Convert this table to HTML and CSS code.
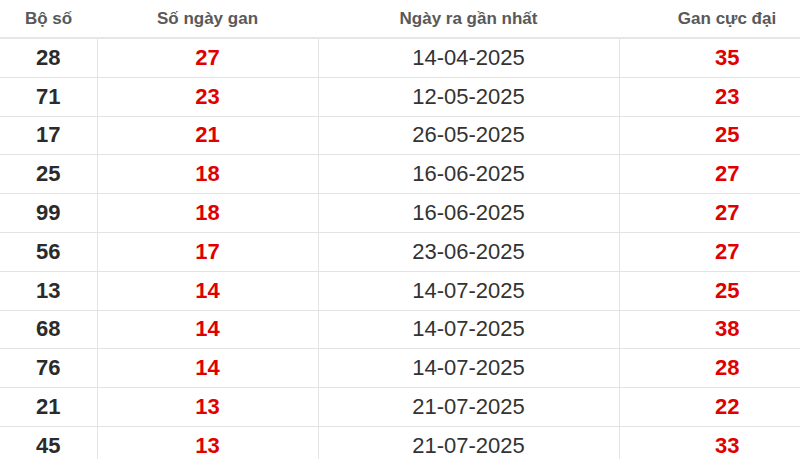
FILE: index.html
```html
<!DOCTYPE html>
<html lang="vi">
<head>
<meta charset="utf-8">
<link rel="stylesheet" href="styles.css">
</head>
<body>
<table class="gan">
  <colgroup>
    <col class="c1"><col class="c2"><col class="c3"><col class="c4">
  </colgroup>
  <thead>
    <tr><th>Bộ số</th><th>Số ngày gan</th><th>Ngày ra gần nhất</th><th>Gan cực đại</th></tr>
  </thead>
  <tbody>
    <tr><td class="num">28</td><td class="red">27</td><td class="date">14-04-2025</td><td class="red">35</td></tr>
    <tr><td class="num">71</td><td class="red">23</td><td class="date">12-05-2025</td><td class="red">23</td></tr>
    <tr><td class="num">17</td><td class="red">21</td><td class="date">26-05-2025</td><td class="red">25</td></tr>
    <tr><td class="num">25</td><td class="red">18</td><td class="date">16-06-2025</td><td class="red">27</td></tr>
    <tr><td class="num">99</td><td class="red">18</td><td class="date">16-06-2025</td><td class="red">27</td></tr>
    <tr><td class="num">56</td><td class="red">17</td><td class="date">23-06-2025</td><td class="red">27</td></tr>
    <tr><td class="num">13</td><td class="red">14</td><td class="date">14-07-2025</td><td class="red">25</td></tr>
    <tr><td class="num">68</td><td class="red">14</td><td class="date">14-07-2025</td><td class="red">38</td></tr>
    <tr><td class="num">76</td><td class="red">14</td><td class="date">14-07-2025</td><td class="red">28</td></tr>
    <tr><td class="num">21</td><td class="red">13</td><td class="date">21-07-2025</td><td class="red">22</td></tr>
    <tr><td class="num">45</td><td class="red">13</td><td class="date">21-07-2025</td><td class="red">33</td></tr>
  </tbody>
</table>
</body>
</html>
```

FILE: styles.css
```css
html, body {
  margin: 0;
  padding: 0;
  background: #ffffff;
  overflow: hidden;
}
body {
  font-family: "Liberation Sans", Arial, sans-serif;
  width: 800px;
  height: 459px;
}
.gan {
  border-collapse: collapse;
  table-layout: fixed;
  width: 835px;
}
.c1 { width: 97px; }
.c2 { width: 221px; }
.c3 { width: 301px; }
.c4 { width: 216px; }
.gan th {
  height: 37px;
  padding: 0;
  font-size: 17px;
  font-weight: bold;
  color: #595959;
  text-align: center;
  vertical-align: middle;
  border-bottom: 2px solid #e6e6e6;
}
.gan td {
  height: 37.8px;
  padding: 0;
  text-align: center;
  vertical-align: middle;
  font-size: 22px;
  border-bottom: 1px solid #e3e3e3;
  border-left: 1px solid #e3e3e3;
}
.gan td:first-child {
  border-left: none;
}
.gan td.num {
  font-weight: bold;
  color: #2b2b2b;
}
.gan td.red {
  font-weight: bold;
  color: #e00000;
}
.gan td.date {
  color: #333333;
}
```
